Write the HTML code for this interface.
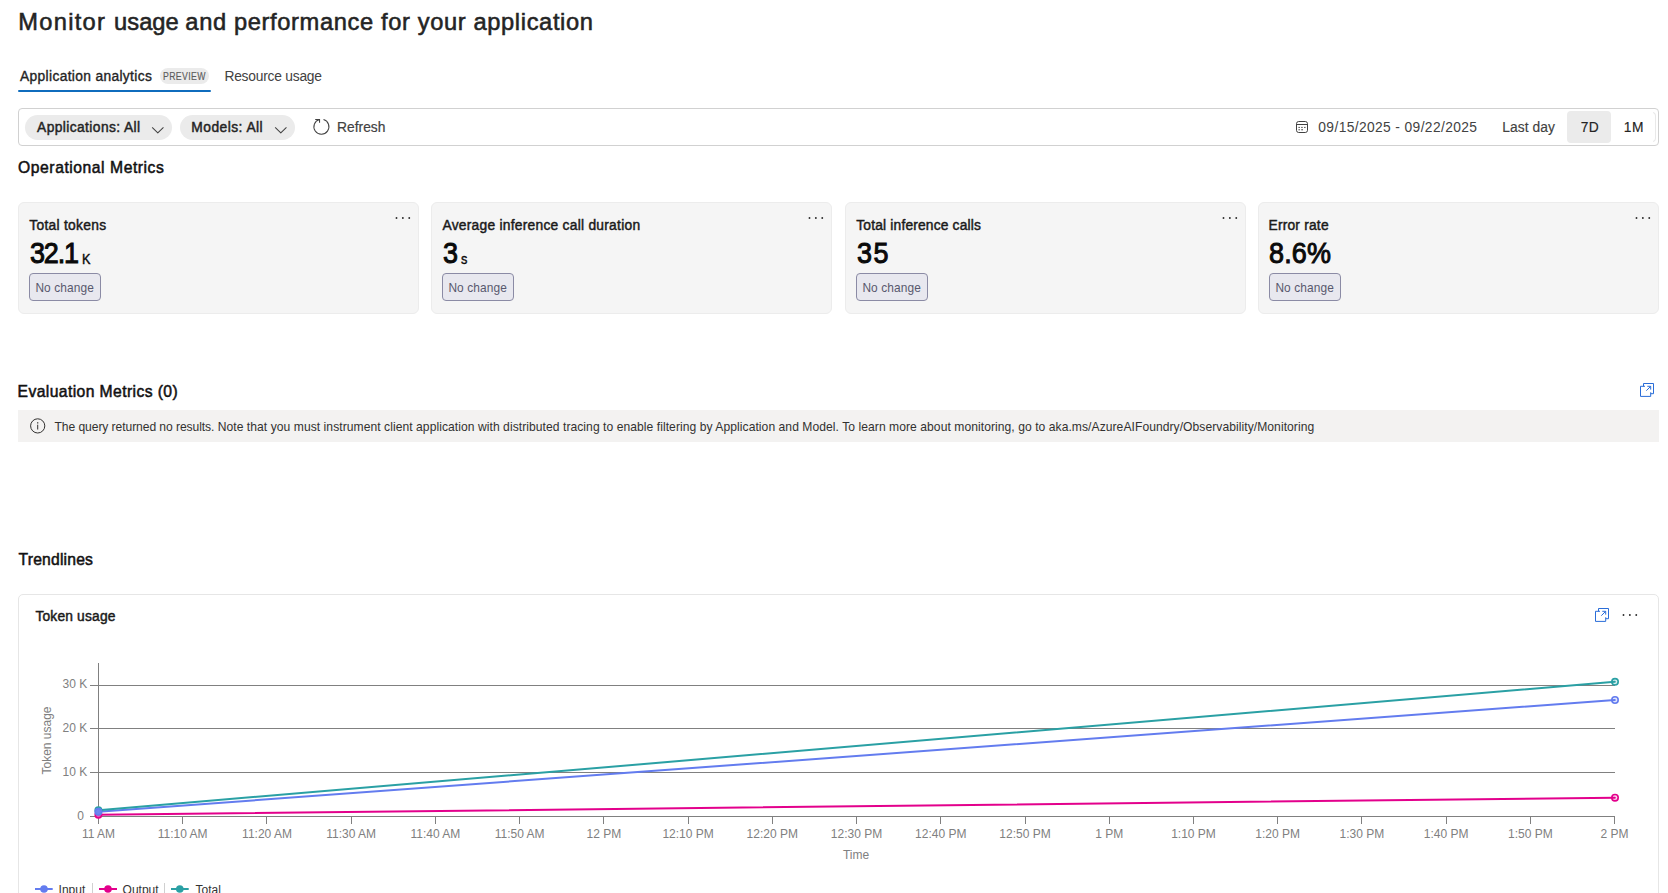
<!DOCTYPE html>
<html lang="en">
<head>
<meta charset="utf-8">
<title>Monitor usage and performance for your application</title>
<style>
  html, body { margin: 0; padding: 0; background: #ffffff; }
  body { width: 1668px; height: 893px; overflow: hidden; position: relative;
         font-family: "Liberation Sans", sans-serif; color: #242424; }
  .abs { position: absolute; }
  .t { position: absolute; white-space: nowrap; line-height: 1; margin: 0; font-weight: 400; }
  .pill { position: absolute; top: 115px; height: 25px; border-radius: 12.5px; background: #ebebeb; }
  .card { position: absolute; top: 202px; height: 110px; width: 399px; background: #f5f5f5;
          border: 1px solid #ececec; border-radius: 6px; }
  .nc { position: absolute; top: 273px; width: 70px; height: 26px; border: 1px solid #8b8ba5;
        border-radius: 4px; background: #e8e8ef; }
</style>
</head>
<body>

<!-- Tabs -->
<div class="abs" id="preview" style="left:160px; top:68px; width:49px; height:16px; border-radius:8px; background:#ebebeb;"></div>
<div class="abs" id="tabline" style="left:18px; top:90px; width:193px; height:2px; background:#0f6cbd; border-radius:1px;"></div>

<!-- Filter bar -->
<div class="abs" id="fbar" style="left:18px; top:108px; width:1639px; height:36px; border:1px solid #d1d1d1; border-radius:4px;"></div>
<div class="pill" id="pill1" style="left:25px; width:147px;"></div>
<svg class="abs" id="chev1" style="left:150px; top:124px;" width="16" height="12" viewBox="0 0 16 12"><path d="M2.4 3.7 L7.8 8.9 L13.2 3.7" fill="none" stroke="#424242" stroke-width="1.05" stroke-linecap="round" stroke-linejoin="round"/></svg>
<div class="pill" id="pill2" style="left:180px; width:115px;"></div>
<svg class="abs" id="chev2" style="left:272.6px; top:124px;" width="16" height="12" viewBox="0 0 16 12"><path d="M2.4 3.7 L7.8 8.9 L13.2 3.7" fill="none" stroke="#424242" stroke-width="1.05" stroke-linecap="round" stroke-linejoin="round"/></svg>
<svg class="abs" id="refico" style="left:311px; top:117px;" width="20" height="20" viewBox="0 0 20 20"><g fill="none" stroke="#424242" stroke-width="1.05"><path d="M12.5 2.5 A7.5 7.5 0 1 1 8.5 2.45"/><path d="M4.2 2.4 H8.55 V5.8"/></g></svg>

<svg class="abs" id="calico" style="left:1295px; top:120px;" width="14" height="14" viewBox="0 0 14 14"><rect x="1.5" y="1.5" width="11" height="11" rx="2.2" fill="none" stroke="#424242" stroke-width="1"/><line x1="1.5" y1="4.5" x2="12.5" y2="4.5" stroke="#424242" stroke-width="1"/><g fill="#424242"><rect x="3.5" y="6.9" width="1.3" height="1.1"/><rect x="6.3" y="6.9" width="1.3" height="1.1"/><rect x="9.2" y="6.9" width="1.3" height="1.1"/><rect x="3.5" y="9.2" width="1.3" height="1.1"/><rect x="6.3" y="9.2" width="1.6" height="1.1"/></g></svg>
<div class="abs" id="b7d" style="left:1567px; top:111px; width:44px; height:32px; border-radius:4px; background:#ebebeb;"></div>

<div class="abs" id="b1m" style="left:1646px; top:112px; width:9px; height:28px; border:1px solid #e9e9e9; border-left:none; border-radius:0 4px 4px 0; clip-path: inset(0 0 0 7px);"></div>

<!-- Metric cards -->
<div class="card" id="card1" style="left:18px;"></div>
<div class="card" id="card2" style="left:431px;"></div>
<div class="card" id="card3" style="left:845px;"></div>
<div class="card" id="card4" style="left:1258px;"></div>
<div class="nc" style="left:29px;"></div><div class="nc" style="left:442px;"></div><div class="nc" style="left:856px;"></div><div class="nc" style="left:1269px;"></div>
<svg class="abs" style="left:395.10px; top:215.50px;" width="16" height="4" viewBox="0 0 16 4"><g fill="#2b2b2b"><circle cx="1.5" cy="2" r="0.95"/><circle cx="7.87" cy="2" r="0.95"/><circle cx="14.25" cy="2" r="0.95"/></g></svg>
<svg class="abs" style="left:808.10px; top:215.50px;" width="16" height="4" viewBox="0 0 16 4"><g fill="#2b2b2b"><circle cx="1.5" cy="2" r="0.95"/><circle cx="7.87" cy="2" r="0.95"/><circle cx="14.25" cy="2" r="0.95"/></g></svg>
<svg class="abs" style="left:1222.10px; top:215.50px;" width="16" height="4" viewBox="0 0 16 4"><g fill="#2b2b2b"><circle cx="1.5" cy="2" r="0.95"/><circle cx="7.87" cy="2" r="0.95"/><circle cx="14.25" cy="2" r="0.95"/></g></svg>
<svg class="abs" style="left:1635.10px; top:215.50px;" width="16" height="4" viewBox="0 0 16 4"><g fill="#2b2b2b"><circle cx="1.5" cy="2" r="0.95"/><circle cx="7.87" cy="2" r="0.95"/><circle cx="14.25" cy="2" r="0.95"/></g></svg>

<!-- Evaluation Metrics -->
<svg class="abs" id="evico" style="left:1640px; top:383px;" width="15" height="15" viewBox="0 0 15 15"><g fill="none" stroke="#1f65d6" stroke-width="0.95"><path d="M3.5 3.3 V0.5 H13.5 V10.7 H10.7"/><path d="M5 3.3 H0.5 V13.4 H10.7 V9.3"/><path d="M6.3 7.7 L10.4 3.6"/><path d="M7.3 3.3 H10.7 V6.6"/></g></svg>
<div class="abs" id="infobar" style="left:18px; top:410px; width:1641px; height:32px; background:#f3f2f1;"></div>
<svg class="abs" id="infoico" style="left:29px; top:417px;" width="18" height="18" viewBox="0 0 18 18"><circle cx="8.7" cy="8.9" r="7.1" fill="none" stroke="#323130" stroke-width="1"/><rect x="8.2" y="7.7" width="1" height="4.8" fill="#323130"/><rect x="8.1" y="5.2" width="1.2" height="1.3" fill="#323130"/></svg>

<!-- Trendlines -->
<div class="abs" id="chartcard" style="left:18px; top:594px; width:1639px; height:320px; border:1px solid #e6e6e6; border-radius:5px;"></div>
<svg class="abs" id="chico" style="left:1595px; top:608px;" width="15" height="15" viewBox="0 0 15 15"><g fill="none" stroke="#1f65d6" stroke-width="0.95"><path d="M3.5 3.3 V0.5 H13.5 V10.7 H10.7"/><path d="M5 3.3 H0.5 V13.4 H10.7 V9.3"/><path d="M6.3 7.7 L10.4 3.6"/><path d="M7.3 3.3 H10.7 V6.6"/></g></svg>
<svg class="abs" style="left:1622.10px; top:612.50px;" width="16" height="4" viewBox="0 0 16 4"><g fill="#2b2b2b"><circle cx="1.5" cy="2" r="0.95"/><circle cx="7.87" cy="2" r="0.95"/><circle cx="14.25" cy="2" r="0.95"/></g></svg>

<h1 class="t" id="title" style="left:18.32px;top:10.94px;font-size:23.7px;letter-spacing:0.623px;color:#242424;-webkit-text-stroke:0.55px #242424;"><span style="letter-spacing:1.273px">Monitor </span><span style="letter-spacing:0.023px">usage </span>and performance for your application</h1>
<div class="t" id="tab1" style="left:20.04px;top:70.32px;font-size:13.8px;letter-spacing:0.338px;color:#242424;-webkit-text-stroke:0.35px #242424;">Application analytics</div>
<div class="t" id="previewt" style="left:162.84px;top:71.53px;font-size:10px;letter-spacing:0.432px;color:#5c5c5c;-webkit-text-stroke:0.15px #5c5c5c;transform:scaleX(0.87);transform-origin:0 0;">PREVIEW</div>
<div class="t" id="tab2" style="left:224.43px;top:70.32px;font-size:13.8px;letter-spacing:-0.226px;color:#424242;">Resource usage</div>
<div class="t" id="pill1t" style="left:37.07px;top:121.32px;font-size:13.8px;letter-spacing:0.401px;color:#242424;-webkit-text-stroke:0.45px #242424;">Applications: All</div>
<div class="t" id="pill2t" style="left:191.35px;top:121.32px;font-size:13.8px;letter-spacing:0.459px;color:#242424;-webkit-text-stroke:0.45px #242424;">Models: All</div>
<div class="t" id="refresh" style="left:336.97px;top:121.32px;font-size:13.8px;letter-spacing:0.023px;color:#424242;-webkit-text-stroke:0.2px #424242;">Refresh</div>
<div class="t" id="dates" style="left:1318.32px;top:121.32px;font-size:13.8px;letter-spacing:0.379px;color:#424242;">09/15/2025 - 09/22/2025</div>
<div class="t" id="lastday" style="left:1502.27px;top:121.32px;font-size:13.8px;letter-spacing:0.081px;color:#424242;-webkit-text-stroke:0.15px #424242;">Last day</div>
<div class="t" id="t7d" style="left:1580.76px;top:121.32px;font-size:13.8px;letter-spacing:0.303px;color:#242424;-webkit-text-stroke:0.15px #242424;">7D</div>
<div class="t" id="t1m" style="left:1623.83px;top:121.32px;font-size:13.8px;letter-spacing:0.428px;color:#242424;-webkit-text-stroke:0.15px #242424;">1M</div>
<h2 class="t" id="opm" style="left:18.10px;top:159.71px;font-size:15.7px;letter-spacing:0.540px;color:#111111;-webkit-text-stroke:0.5px #111111;">Operational Metrics</h2>
<div class="t" id="c1t" style="left:29.37px;top:219.32px;font-size:13.8px;letter-spacing:0.278px;color:#1a1a1a;-webkit-text-stroke:0.45px #1a1a1a;">Total tokens</div>
<div class="t" id="c1v" style="left:29.94px;top:239.45px;font-size:29px;letter-spacing:-1.229px;color:#0a0a0a;-webkit-text-stroke:1.0px #0a0a0a;transform:scaleX(0.93);transform-origin:0 0;">32.1</div>
<div class="t" id="c1u" style="left:82.30px;top:251.30px;font-size:15px;letter-spacing:0.000px;color:#0a0a0a;-webkit-text-stroke:0.4px #0a0a0a;transform:scaleX(0.85);transform-origin:0 0;">K</div>
<div class="t" id="c1n" style="left:35.40px;top:282.93px;font-size:11.9px;letter-spacing:0.121px;color:#58586e;">No change</div>
<div class="t" id="c2t" style="left:442.46px;top:219.32px;font-size:13.8px;letter-spacing:0.255px;color:#1a1a1a;-webkit-text-stroke:0.45px #1a1a1a;">Average inference call duration</div>
<div class="t" id="c2v" style="left:442.92px;top:239.45px;font-size:29px;letter-spacing:0.000px;color:#0a0a0a;-webkit-text-stroke:1.0px #0a0a0a;transform:scaleX(0.93);transform-origin:0 0;">3</div>
<div class="t" id="c2u" style="left:461.30px;top:251.30px;font-size:15px;letter-spacing:0.000px;color:#0a0a0a;-webkit-text-stroke:0.4px #0a0a0a;transform:scaleX(0.85);transform-origin:0 0;">s</div>
<div class="t" id="c2n" style="left:448.40px;top:282.93px;font-size:11.9px;letter-spacing:0.121px;color:#58586e;">No change</div>
<div class="t" id="c3t" style="left:856.29px;top:219.32px;font-size:13.8px;letter-spacing:0.173px;color:#1a1a1a;-webkit-text-stroke:0.45px #1a1a1a;">Total inference calls</div>
<div class="t" id="c3v" style="left:856.94px;top:239.45px;font-size:29px;letter-spacing:1.507px;color:#0a0a0a;-webkit-text-stroke:1.0px #0a0a0a;transform:scaleX(0.93);transform-origin:0 0;">35</div>
<div class="t" id="c3n" style="left:862.40px;top:282.93px;font-size:11.9px;letter-spacing:0.121px;color:#58586e;">No change</div>
<div class="t" id="c4t" style="left:1268.50px;top:219.32px;font-size:13.8px;letter-spacing:0.200px;color:#1a1a1a;-webkit-text-stroke:0.45px #1a1a1a;">Error rate</div>
<div class="t" id="c4v" style="left:1269.22px;top:239.45px;font-size:29px;letter-spacing:0.149px;color:#0a0a0a;-webkit-text-stroke:1.0px #0a0a0a;transform:scaleX(0.93);transform-origin:0 0;">8.6%</div>
<div class="t" id="c4n" style="left:1275.40px;top:282.93px;font-size:11.9px;letter-spacing:0.121px;color:#58586e;">No change</div>
<h2 class="t" id="evm" style="left:17.61px;top:383.71px;font-size:15.7px;letter-spacing:0.399px;color:#111111;-webkit-text-stroke:0.5px #111111;">Evaluation Metrics (0)</h2>
<div class="t" id="infot" style="left:54.53px;top:420.76px;font-size:12.1px;letter-spacing:0.058px;color:#323130;"><span style="letter-spacing:-0.072px">The query returned no results. </span>Note that you must instrument client application with distributed tracing to enable filtering by Application and Model. To learn more about monitoring, go to aka.ms/AzureAIFoundry/Observability/Monitoring</div>
<h2 class="t" id="trend" style="left:18.62px;top:551.71px;font-size:15.7px;letter-spacing:0.179px;color:#111111;-webkit-text-stroke:0.5px #111111;">Trendlines</h2>
<div class="t" id="tokt" style="left:35.43px;top:610.32px;font-size:13.8px;letter-spacing:0.175px;color:#1a1a1a;-webkit-text-stroke:0.45px #1a1a1a;">Token usage</div>


<svg class="abs" id="chart" style="left:0; top:640px;" width="1668" height="253" viewBox="0 640 1668 253" font-family="Liberation Sans, sans-serif">
  <g stroke="#808080" stroke-width="1" shape-rendering="crispEdges">
    <line x1="90" y1="685.5" x2="1615" y2="685.5"/>
    <line x1="90" y1="728.5" x2="1615" y2="728.5"/>
    <line x1="90" y1="772.5" x2="1615" y2="772.5"/>
    <line x1="90" y1="816.5" x2="1615" y2="816.5"/>
    <line x1="98.5" y1="663" x2="98.5" y2="824"/>
  </g>
  <g stroke="#808080" stroke-width="1" shape-rendering="crispEdges" id="xticks"><line x1="98.5" y1="816" x2="98.5" y2="824"/><line x1="182.5" y1="816" x2="182.5" y2="824"/><line x1="266.5" y1="816" x2="266.5" y2="824"/><line x1="351.5" y1="816" x2="351.5" y2="824"/><line x1="435.5" y1="816" x2="435.5" y2="824"/><line x1="519.5" y1="816" x2="519.5" y2="824"/><line x1="603.5" y1="816" x2="603.5" y2="824"/><line x1="688.5" y1="816" x2="688.5" y2="824"/><line x1="772.5" y1="816" x2="772.5" y2="824"/><line x1="856.5" y1="816" x2="856.5" y2="824"/><line x1="940.5" y1="816" x2="940.5" y2="824"/><line x1="1025.5" y1="816" x2="1025.5" y2="824"/><line x1="1109.5" y1="816" x2="1109.5" y2="824"/><line x1="1193.5" y1="816" x2="1193.5" y2="824"/><line x1="1277.5" y1="816" x2="1277.5" y2="824"/><line x1="1361.5" y1="816" x2="1361.5" y2="824"/><line x1="1446.5" y1="816" x2="1446.5" y2="824"/><line x1="1530.5" y1="816" x2="1530.5" y2="824"/><line x1="1614.5" y1="816" x2="1614.5" y2="824"/></g>
  <g font-size="12" fill="#808080" text-anchor="end">
    <text x="87.2" y="688.2">30 K</text><text x="87.2" y="731.8">20 K</text><text x="87.2" y="775.6">10 K</text><text x="83.9" y="819.6">0</text>
  </g>
  <text font-size="12" fill="#808080" text-anchor="middle" transform="translate(51.4,740.5) rotate(-90)">Token usage</text>
  <g font-size="12" fill="#808080" text-anchor="middle" id="xlabels"><text x="98.5" y="837.7">11 AM</text><text x="182.7" y="837.7">11:10 AM</text><text x="267.0" y="837.7">11:20 AM</text><text x="351.2" y="837.7">11:30 AM</text><text x="435.4" y="837.7">11:40 AM</text><text x="519.6" y="837.7">11:50 AM</text><text x="603.9" y="837.7">12 PM</text><text x="688.1" y="837.7">12:10 PM</text><text x="772.3" y="837.7">12:20 PM</text><text x="856.5" y="837.7">12:30 PM</text><text x="940.8" y="837.7">12:40 PM</text><text x="1025.0" y="837.7">12:50 PM</text><text x="1109.2" y="837.7">1 PM</text><text x="1193.5" y="837.7">1:10 PM</text><text x="1277.7" y="837.7">1:20 PM</text><text x="1361.9" y="837.7">1:30 PM</text><text x="1446.1" y="837.7">1:40 PM</text><text x="1530.4" y="837.7">1:50 PM</text><text x="1614.6" y="837.7">2 PM</text></g>
  <text x="856" y="859" font-size="12" fill="#808080" text-anchor="middle">Time</text>
  <!-- end markers (under lines) -->
  <g stroke-width="1.6">
    <circle cx="1615" cy="681.8" r="3.2" fill="#d6eeee" stroke="#2aa0a4"/>
    <circle cx="1615" cy="700" r="3.2" fill="#e0e5fc" stroke="#637cef"/>
    <circle cx="1615" cy="797.7" r="3.2" fill="#fbd5ed" stroke="#e3008c"/>
  </g>
  <!-- series -->
  <g fill="none" stroke-width="2" stroke-linecap="round">
    <line x1="98.5" y1="811.8" x2="1614.8" y2="700" stroke="#637cef"/>
    <line x1="98.5" y1="814.8" x2="1614.8" y2="797.7" stroke="#e3008c"/>
    <line x1="98.5" y1="810.2" x2="1614.8" y2="681.8" stroke="#2aa0a4"/>
  </g>
  <!-- start markers -->
  <g stroke-width="1.6">
    <circle cx="98.4" cy="810.2" r="3.2" fill="#5fb8bb" stroke="#2aa0a4"/>
    <circle cx="98.4" cy="814.8" r="3.2" fill="#ec4fae" stroke="#e3008c"/>
    <circle cx="98.4" cy="811.8" r="3.2" fill="#6f86f0" stroke="#637cef"/>
  </g>
  <!-- legend -->
  <g stroke-width="2" fill="none">
    <line x1="35" y1="889" x2="52.7" y2="889" stroke="#637cef"/>
    <line x1="99" y1="889" x2="117" y2="889" stroke="#e3008c"/>
    <line x1="171" y1="889" x2="188.7" y2="889" stroke="#2aa0a4"/>
  </g>
  <circle cx="44" cy="889" r="3.8" fill="#637cef"/><circle cx="108" cy="889" r="3.8" fill="#e3008c"/><circle cx="179.8" cy="889" r="3.8" fill="#2aa0a4"/>
  <g stroke="#d0d0d0" stroke-width="1" shape-rendering="crispEdges"><line x1="92.5" y1="883" x2="92.5" y2="893"/><line x1="164.5" y1="883" x2="164.5" y2="893"/></g>
  <g font-size="12" fill="#333333"><text x="58.6" y="893.6">Input</text><text x="122.6" y="893.6">Output</text><text x="195.6" y="893.6">Total</text></g>
</svg>
</body>
</html>
